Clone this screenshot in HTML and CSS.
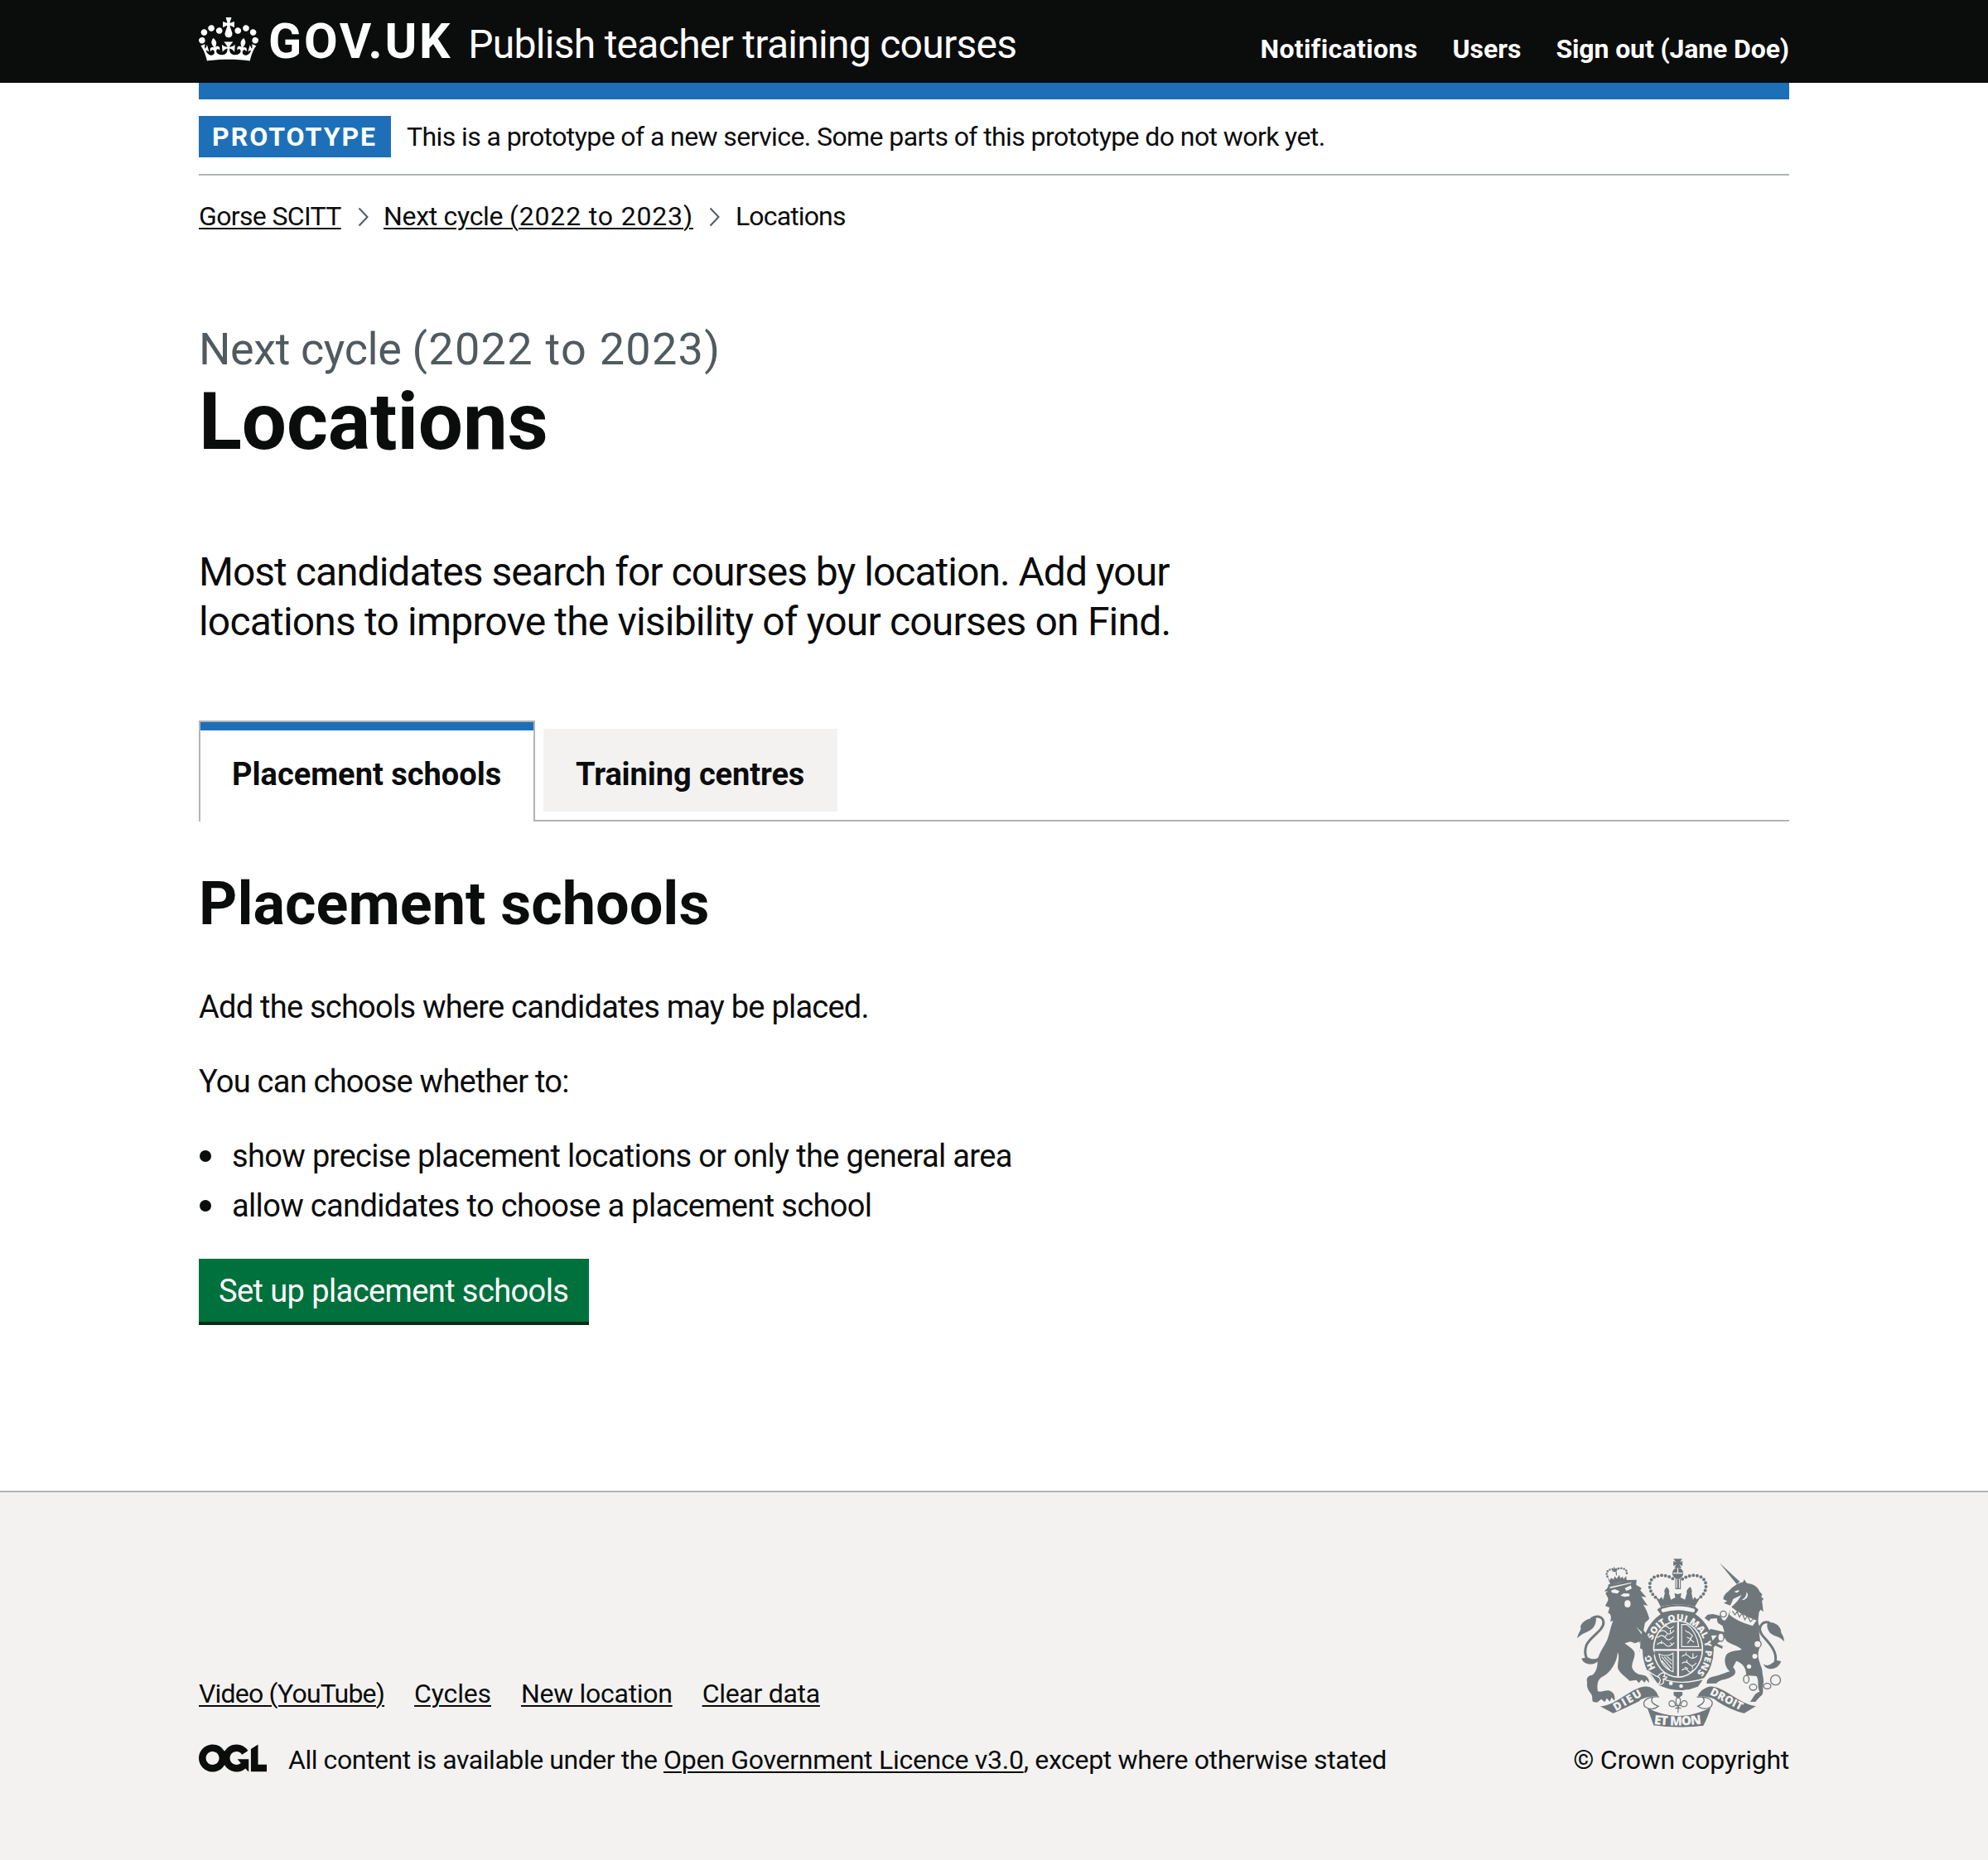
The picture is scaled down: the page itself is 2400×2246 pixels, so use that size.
FILE: index.html
```html
<!DOCTYPE html>
<html lang="en">
<head>
<meta charset="utf-8">
<title>Locations - Publish teacher training courses - GOV.UK</title>
<link rel="stylesheet" href="styles.css">
</head>
<body>
<header class="header">
  <div class="container header__inner">
    <svg class="header__crown" viewBox="0 0 132 97" aria-hidden="true"><path fill="currentColor" fill-rule="evenodd" d="M25 30.2c3.5 1.5 7.7-.2 9.1-3.7 1.5-3.6-.2-7.8-3.9-9.2-3.6-1.4-7.6.3-9.1 3.9-1.4 3.5.3 7.5 3.9 9zM9 39.5c3.6 1.5 7.8-.2 9.2-3.7 1.5-3.6-.2-7.8-3.9-9.1-3.6-1.5-7.6.2-9.1 3.8-1.4 3.5.3 7.5 3.8 9zM4.4 57.2c3.5 1.5 7.7-.2 9.1-3.8 1.5-3.6-.2-7.7-3.9-9.1-3.5-1.5-7.6.3-9.1 3.8-1.4 3.5.3 7.6 3.9 9.1zm38.3-21.4c3.5 1.5 7.7-.2 9.1-3.8 1.5-3.6-.2-7.7-3.9-9.1-3.6-1.5-7.6.3-9.1 3.8-1.3 3.6.4 7.7 3.9 9.1zm64.4-5.6c-3.6 1.5-7.8-.2-9.1-3.7-1.5-3.6.2-7.8 3.8-9.2 3.6-1.4 7.7.3 9.2 3.9 1.3 3.5-.4 7.5-3.9 9zm15.9 9.3c-3.6 1.5-7.7-.2-9.1-3.7-1.5-3.6.2-7.8 3.7-9.1 3.6-1.5 7.7.2 9.2 3.8 1.5 3.5-.3 7.5-3.8 9zm4.7 17.7c-3.6 1.5-7.8-.2-9.2-3.8-1.5-3.6.2-7.7 3.9-9.1 3.6-1.5 7.7.3 9.2 3.8 1.3 3.5-.4 7.6-3.9 9.1zM89.3 35.8c-3.6 1.5-7.8-.2-9.2-3.8-1.4-3.6.2-7.7 3.9-9.1 3.6-1.5 7.7.3 9.2 3.8 1.4 3.6-.3 7.7-3.9 9.1zM69.7 17.7l8.9 4.7V9.3l-8.9 2.8c-.2-.3-.5-.6-.9-.9L72.4 0H59.6l3.5 11.2c-.3.3-.6.5-.9.9l-8.8-2.8v13.1l8.8-4.7c.3.3.6.7.9.9l-5 15.4v.1c-.2.8-.4 1.6-.4 2.4 0 4.1 3.1 7.5 7 8.1h.2c.3 0 .7.1 1 .1.4 0 .7 0 1-.1h.2c4-.6 7.1-4.1 7.1-8.1 0-.8-.1-1.7-.4-2.4V34l-5.1-15.4c.4-.2.7-.6 1-.9zM66 92.8c16.9 0 32.8 1.1 47.1 3.2 4-16.9 8.9-26.7 14-33.5l-9.6-3.4c1 4.9 1.1 7.2 0 10.2-1.5-1.4-3-4.3-4.2-8.7L108.6 76c2.8-2 5-3.2 7.5-3.3-4.4 9.4-10 11.9-13.6 11.2-4.3-.8-6.3-4.6-5.6-7.9 1-4.7 5.7-5.9 8-.5 4.3-8.7-3-11.4-7.6-8.8 7.1-7.2 7.9-13.5 2.1-21.1-8 6.1-8.1 12.3-4.5 20.8-4.7-5.4-12.1-2.5-9.5 6.2 3.4-5.2 7.9-2 7.2 3.1-.6 4.3-6.4 7.8-13.5 7.2-10.3-.9-10.9-8-11.2-13.8 2.5-.5 7.1 1.8 11 7.3L80.2 60c-4.1 4.4-8 5.3-12.3 5.4 1.4-4.4 8-11.6 8-11.6H55.5s6.4 7.2 7.9 11.6c-4.2-.1-8-1-12.3-5.4l1.4 16.4c3.9-5.5 8.5-7.7 10.9-7.3-.3 5.8-.9 12.8-11.1 13.8-7.2.6-12.9-2.9-13.5-7.2-.7-5 3.8-8.3 7.1-3.1 2.7-8.7-4.6-11.6-9.4-6.2 3.7-8.5 3.6-14.7-4.6-20.8-5.8 7.6-5 13.9 2.2 21.1-4.7-2.6-11.9.1-7.7 8.8 2.3-5.5 7.1-4.2 8.1.5.7 3.3-1.3 7.1-5.7 7.9-3.5.7-9-1.8-13.5-11.2 2.5.1 4.7 1.3 7.5 3.3l-4.7-15.4c-1.2 4.4-2.7 7.2-4.3 8.7-1.1-3-.9-5.3 0-10.2l-9.5 3.4c5 6.9 9.9 16.7 14 33.5 14.8-2.1 30.8-3.2 47.7-3.2z"/></svg>
    <a class="header__logo">GOV.UK</a>
    <a class="header__product">Publish teacher training courses</a>
    <nav class="header__nav"><a class="nav-notifications">Notifications</a><a>Users</a><a class="nav-signout">Sign out (Jane Doe)</a></nav>
  </div>
</header>
<div class="container">
  <div class="header-bar"></div>
  <div class="phase-banner"><strong class="tag">PROTOTYPE</strong><span class="phase-banner__text">This is a prototype of a new service. Some parts of this prototype do not work yet.</span></div>
  <nav class="breadcrumbs">
    <a class="link crumb-org">Gorse SCITT</a>
    <svg class="chevron" viewBox="0 0 14 24"><path d="M1.5 1.5 11.5 12 1.5 22.5"/></svg>
    <a class="link crumb-cycle">Next cycle <span class="crumb-cycle__years">(2022 to 2023)</span></a>
    <svg class="chevron" viewBox="0 0 14 24"><path d="M1.5 1.5 11.5 12 1.5 22.5"/></svg>
    <span class="crumb-current">Locations</span>
  </nav>
  <main class="main">
    <span class="caption">Next cycle <span class="caption__years">(2022 to 2023)</span></span>
    <h1 class="heading-xl">Locations</h1>
    <p class="lead"><span class="lead__first">Most candidates search for courses by location. Add your</span><br>locations to improve the visibility of your courses on Find.</p>
    <ul class="tabs">
      <li class="tab tab--selected">Placement schools</li>
      <li class="tab">Training centres</li>
    </ul>
    <h2 class="heading-l">Placement schools</h2>
    <p class="body">Add the schools where candidates may be placed.</p>
    <p class="body">You can choose whether to:</p>
    <ul class="list">
      <li>show precise placement locations or only the general area</li>
      <li>allow candidates to choose a placement school</li>
    </ul>
    <a class="button">Set up placement schools</a>
  </main>
</div>
<footer class="footer">
  <div class="container footer__inner">
    <div class="footer__meta">
      <nav class="footer__links"><a class="link f-video">Video (YouTube)</a><a class="link f-cycles">Cycles</a><a class="link">New location</a><a class="link">Clear data</a></nav>
      <div class="licence">
        <svg class="licence__logo" viewBox="0 0 483.2 195.7" aria-label="OGL"><path fill="currentColor" d="M421.5 142.8V.1l-50.7 32.3v161.1h112.4v-50.7zm-122.3-9.6A47.12 47.12 0 0 1 221 97.8c0-26 21.1-47.1 47.1-47.1 16.7 0 31.4 8.7 39.7 21.8l42.7-27.2A97.63 97.63 0 0 0 268.1 0c-36.5 0-68.3 20.1-85.1 49.7A98 98 0 0 0 97.8 0C43.9 0 0 43.9 0 97.8s43.9 97.8 97.8 97.8c36.5 0 68.3-20.1 85.1-49.7a97.76 97.76 0 0 0 149.6 25.4l19.4 22.2h3v-87.8h-80l24.3 27.5zM97.8 145c-26 0-47.1-21.1-47.1-47.1s21.1-47.1 47.1-47.1 47.1 21.1 47.1 47.1S123.8 145 97.8 145"/></svg>
        <span><span class="licence__lead">All content is available under the </span><a class="link licence__link">Open Government Licence v3.0</a>, except where otherwise stated</span>
      </div>
    </div>
    <div class="copyright">
      <svg class="crest" viewBox="70 65 755 630" aria-hidden="true">
        <defs>
          <path id="garter" d="M357 462A99 109 0 1 1 500 484"/>
          <path id="dieu" d="M213 618Q262 590 316 558"/>
          <path id="droit" d="M551 556Q604 584 668 617"/>
          <path id="mon" d="M350 664Q438 676 526 663"/>
        </defs>
        <!-- lion -->
        <g class="ink">
          <path d="M186 158C203 160 228 153 245 143L288 142L286 160L306 172L301 180L323 205L305 202L328 236L312 232C325 252 330 268 334 283L318 298L313 325C330 338 343 365 347 396L353 408L345 425L330 412L327 423L313 412L316 400L298 402L304 388L298 366L282 372L265 366L245 372C257 384 282 393 281 412C280 430 268 444 272 462C280 480 296 486 310 487C325 488 334 500 333 515L322 504L317 515L306 504L296 516L287 505L262 508C248 494 224 478 220 462C218 440 228 420 219 405C218 440 193 478 168 491C148 500 143 518 147 545C155 551 170 543 184 543C202 545 212 560 208 580L197 568L191 583L180 571L172 585L160 574L145 586L130 584C124 572 131 566 122 554C110 540 106 525 109 513C104 500 112 488 127 487C141 478 147 456 146 438C148 410 172 382 182 358C190 338 194 310 203 291L192 293C200 270 190 262 184 262L190 243L174 236C183 222 188 213 182 204L175 190L184 183L172 184C172 178 184 178 186 158Z"/>
          <path d="M182 132l9 12 4-9 10 6 3-12 8 9 9-14 4 12 9-6 2 10 10-12 2 16-58 18z"/>
          <path d="M206 96l3 10-7 4 12 3 1 13M199 106l20-5" class="line"/>
          <path d="M182 130C176 122 180 108 192 105C200 101 207 104 210 112C216 100 228 99 238 101C250 104 255 112 251 124" class="beads small"/>
          <path d="M73 354C75 334 91 322 84 312C90 295 107 281 141 279C142 300 136 315 118 326C101 335 88 337 73 354Z"/>
          <path d="M100 424L88 427C96 447 119 450 132 446C145 443 152 432 158 418C143 430 127 432 115 424Z"/>
        </g>
        <path class="tail" d="M123 283C142 270 164 273 168 294C171 325 119 348 106 379C99 398 101 416 109 430"/>
        <g class="paper">
          <path d="M195 181l13-5 18 7-7 9-20-3zM245 172l22-10 3 12-19 8zM229 199l12-8 20 1 2 9-18 3z"/>
          <ellipse cx="255" cy="229" rx="11" ry="13"/>
          <path d="M190 168L270 151L267 155L192 173z"/>
          <path d="M286 312L322 347L337 380L333 380L314 351z"/>
        </g>
        <!-- garter and shield -->
        <ellipse cx="438" cy="396" rx="138" ry="156" class="paper"/>
        <ellipse cx="438" cy="396" rx="129" ry="148" class="ink"/>
        <ellipse cx="438" cy="393" rx="91" ry="104" class="paper"/>
        <ellipse cx="438" cy="393" rx="86" ry="99" class="ink"/>
        <path d="M438 294V492M352 396H524" class="cut wide"/>
        <g class="cut">
          <path d="M362 352q18-17 30 0t30-5M368 331q18-12 28 2t28-8M385 312q12-6 18 3t20-5M362 376q18-14 30 1t32-7M393 300v10M399 340l-8 8M410 370l8 8M378 362v12M410 322v12"/>
          <path d="M451 304H470Q504 328 513 384H451ZM474 330l16 14-8 14 14 10M470 350l14 6-12 16M464 325l10 8"/>
          <path d="M369 411Q398 424 420 408V475Q377 460 369 411ZM378 420L414 462M388 421L415 448M398 420L416 436M378 434L408 468"/>
          <path d="M452 420q14-14 26 0t30-3M452 445q14-12 26 2t26-4M452 470q12-12 22 1t18-3M467 405v10M492 408v16M470 432v12M490 452v12M462 458l12 6"/>
        </g>
        <path d="M327 470C380 512 446 526 533 500L512 530Q440 560 367 525Z" class="ink edge"/>
        <path d="M365 492C382 470 398 480 386 492Q410 494 384 502Q392 524 365 520Q383 506 365 492Z" class="ink edge"/>
        <g class="paper"><circle cx="412" cy="517" r="7"/><circle cx="449" cy="527" r="7"/></g>
        <g class="motto"><text class="motto__ring" textLength="500" lengthAdjust="spacingAndGlyphs"><textPath href="#garter">HONI SOIT QUI MAL Y PENSE</textPath></text></g>
        <path d="M308 322C330 338 346 370 347 398L354 408L345 426L330 414L325 425L313 412L316 398L300 390Z" class="ink"/>
        <!-- imperial crown -->
        <g class="ink">
          <path d="M421 66H453L445 78 454 74V92L443 87 451 99H424L432 87 421 92V74L430 78Z"/>
          <circle cx="437" cy="118" r="20"/>
          <path d="M356 203L370 213 378 204 384 214 390 190Q384 180 397 168 410 180 405 190L412 214 428 206 425 190 437 194 450 190 447 206 463 214 470 190Q465 180 482 167 491 180 487 190L492 214 498 204 505 213 520 203 499 239Q438 223 375 239Z"/>
          <path d="M428 138H448V176H428Z"/>
          <path d="M377 239Q438 222 499 239L512 250Q505 262 500 267Q438 250 375 267L362 250Z"/>
        </g>
        <path d="M433 140V172M443 140V172" class="cut"/><path d="M420 118H455M437 99V118" class="cut"/>
        <path d="M379 247Q438 228 497 247Q502 257 493 260Q438 244 383 260Q374 255 379 247Z" class="paper"/>
        <path class="beads" d="M356 205C326 180 331 139 357 130C382 121 406 129 420 139M454 139C468 129 492 121 517 130C543 139 549 180 519 205"/>
        <!-- unicorn -->
        <g class="ink">
          <path d="M588 81L662 149L650 157Z"/>
          <path d="M654 156L674 150 677 140 687 154C714 157 728 169 733 184L743 195 739 204 748 211 742 218 747 258 737 250 731 259C730 278 724 292 733 311C726 332 742 367 733 389C722 420 732 432 737 452C746 470 742 484 746 492L748 512C741 535 753 556 735 565L718 584 699 584C714 565 713 554 733 547C723 526 733 508 722 491L685 488C684 463 676 446 649 436L637 459C652 475 646 487 630 494C611 506 592 500 577 517L542 518Q540 500 560 494C586 490 603 480 625 474C603 452 604 423 616 410C635 395 659 400 669 394C641 371 617 377 607 352L579 373 600 383 598 392 572 380 567 388 558 368 579 343 555 344 545 330 556 320 606 331 599 309 582 298 578 281 556 283 550 292 534 280 545 268 564 266 592 273C602 298 609 291 618 275L632 240C650 225 660 210 668 197L638 211 627 235 604 226 616 219 602 213C603 192 620 187 633 171Z"/>
          <path d="M822 366C808 346 786 348 771 334Q757 317 762 297C785 292 805 307 810 323 810 342 822 340 822 366Z"/>
          <path d="M746 447C768 461 779 440 794 433L811 437C804 461 775 474 753 457Z"/>
        </g>
        <path class="tail" d="M770 297C740 289 727 317 739 336C748 355 801 393 790 438"/>
        <g class="paper">
          <path d="M629 239Q663 268 722 289L708 309Q648 291 624 268Z"/>
          <path d="M641 185l15-6 4 4-9 6zM668 216Q688 203 686 185L691 195Q690 215 668 216Z"/>
        </g>
        <path d="M635 255L644 269 652 257 660 277 670 263 680 287 689 272 700 294 712 282" class="line"/>
        <g class="rings"><circle cx="791" cy="505" r="18"/><ellipse cx="761" cy="527" rx="13" ry="10"/><ellipse cx="710" cy="531" rx="13" ry="11"/><ellipse cx="685" cy="502" rx="10" ry="14"/><ellipse cx="602" cy="266" rx="11" ry="11"/><ellipse cx="593" cy="350" rx="11" ry="15"/><ellipse cx="726" cy="375" rx="13" ry="13"/></g>
        <g class="paper"><circle cx="716" cy="419" r="9"/><circle cx="695" cy="456" r="8"/></g>
        <!-- scroll -->
        <g class="ink edge">
          <path d="M147 598C212 602 262 530 320 526Q357 528 369 565Q315 565 297 584Q250 607 203 628Z"/>
          <path d="M727 598C665 596 611 527 553 526Q515 536 506 567Q560 565 579 584Q626 615 678 628Z"/>
          <path d="M323 602Q380 633 438 633Q500 633 560 600Q547 642 531 672Q438 684 348 671Z"/>
        </g>
        <path class="ribbon" d="M369 566C331 563 303 580 318 602Q345 619 367 600Q330 586 348 566M506 567C550 564 572 580 557 602Q532 617 509 600Q543 586 527 566"/>
        <g class="motto"><text textLength="112"><textPath href="#dieu">DIEU</textPath></text><text textLength="128"><textPath href="#droit">DROIT</textPath></text><text class="motto__mon" textLength="174"><textPath href="#mon">ET MON</textPath></text></g>
        <path class="line" d="M424 550H452M438 552V572M431 575C436 562 441 562 446 575C450 591 440 589 440 606M431 575C427 591 436 589 436 606M427 599C400 611 399 576 419 580Q429 585 428 597H449Q447 585 457 580C477 576 476 611 449 599M427 607H449M438 607V624"/>
        <path d="M422 549H454V560L438 572 422 560Z" class="ink"/>
      </svg>
      <span>© Crown copyright</span>
    </div>
  </div>
</footer>
</body>
</html>
```
FILE: styles.css
```css
* { box-sizing: border-box; }
body {
  margin: 0;
  background: #f3f2f1;
  color: #0b0c0c;
  font: 32px/40px Roboto, "Noto Sans", sans-serif;
  letter-spacing: -0.25px;
}
h1, h2, p, ul { margin: 0; padding: 0; }
ul { list-style: none; }
body > .container { background: #fff; box-shadow: 0 0 0 100vmax #fff; clip-path: inset(0 -100vmax); }
.container { width: 1920px; margin: 0 auto; }
.link { text-decoration: underline; text-decoration-thickness: 2px; text-underline-offset: 3px; }

.header { height: 100px; background: #0b0c0c; color: #fff; }
.header__inner { display: flex; align-items: baseline; padding-top: 20px; white-space: nowrap; }
.header__crown { width: 72px; height: 53px; margin-top: 1px; align-self: flex-start; }
.header__logo { margin-left: 12px; font-size: 59px; line-height: 60px; font-weight: 700; letter-spacing: 2.7px; }
.header__product { margin-left: 19px; font-size: 48px; line-height: 60px; letter-spacing: -0.72px; }
.header__nav { display: flex; gap: 42px; margin-left: auto; font-weight: 700; letter-spacing: 0; }
.nav-notifications { letter-spacing: 0.35px; }
.nav-signout { letter-spacing: -0.12px; }
.header-bar { height: 20px; background: #1d70b8; }

.phase-banner { display: flex; align-items: center; height: 92px; border-bottom: 2px solid #b1b4b6; letter-spacing: -0.59px; }
.tag { width: 232px; padding-left: 16px; background: #1d70b8; color: #fff; line-height: 50px; letter-spacing: 2px; }
.phase-banner__text { margin-left: 19px; }

.breadcrumbs { display: flex; align-items: center; padding-top: 29px; white-space: nowrap; }
.crumb-org { width: 172px; letter-spacing: -0.65px; }
.crumb-cycle { width: 373px; letter-spacing: -0.3px; }
.crumb-cycle__years { letter-spacing: 0.84px; }
.crumb-current { margin-left: 1px; letter-spacing: -0.86px; }
.chevron { width: 14px; height: 24px; margin: 2px 17px 0 20px; fill: none; stroke: #505a5f; stroke-width: 2; }

.main { padding: 111px 0 204px; }
.caption { display: block; color: #505a5f; font-size: 54px; line-height: 60px; letter-spacing: -0.4px; }
.caption__years { letter-spacing: 1.28px; }
.heading-xl { margin-top: 7px; font-size: 96px; line-height: 100px; letter-spacing: -0.1px; }
.lead { margin-top: 102px; font-size: 48px; line-height: 60px; letter-spacing: -0.82px; white-space: nowrap; }
.lead__first { letter-spacing: -0.98px; }
.tabs { display: flex; gap: 10px; height: 122px; margin-top: 89px; border-bottom: 2px solid #b1b4b6; font-size: 38px; line-height: 50px; font-weight: 700; letter-spacing: -0.1px; white-space: nowrap; }
.tab { width: 355px; height: 100px; margin-top: 10px; padding: 30px 0 0 39px; background: #f3f2f1; }
.tab--selected { width: 406px; height: 122px; margin-top: 0; padding: 38px 0 0 38px; background: #fff; border: 2px solid #b1b4b6; border-bottom: 0; box-shadow: inset 0 10px #1d70b8; letter-spacing: 0; }
.heading-l { margin-top: 60px; font-size: 72px; line-height: 80px; letter-spacing: 0; }
.body { margin-top: 40px; font-size: 38px; line-height: 50px; letter-spacing: -0.76px; }
.heading-l + .body { margin-top: 59px; }
.list { display: grid; gap: 10px; margin-top: 40px; font-size: 38px; line-height: 50px; letter-spacing: -0.66px; }
.list li { display: flex; align-items: center; }
.list li::before { content: ""; width: 14px; height: 14px; margin: 0 25px 0 1px; border-radius: 50%; background: #0b0c0c; }
.button { display: block; width: 471px; height: 76px; margin-top: 39px; padding: 14px 0 0 24px; background: #00703c; box-shadow: 0 4px #002d18; color: #fff; font-size: 38px; line-height: 50px; letter-spacing: -0.59px; }

.footer { height: 446px; border-top: 2px solid #b1b4b6; background: #f3f2f1; }
.footer__inner { display: flex; justify-content: space-between; align-items: flex-end; height: 343px; white-space: nowrap; }
.footer__links { display: flex; gap: 36px; letter-spacing: -0.29px; }
.f-video { letter-spacing: -0.8px; }
.f-cycles { letter-spacing: -0.15px; }
.licence { display: flex; align-items: center; margin-top: 40px; letter-spacing: -0.33px; }
.licence__lead { letter-spacing: -0.44px; }
.licence__link { letter-spacing: -0.27px; }
.licence__logo { width: 82px; height: 34px; margin: -4px 26px 0 0; }
.copyright { display: flex; flex-direction: column; align-items: flex-end; }
.crest { width: 252px; height: 210px; margin: 0 5px 13px 0; overflow: visible; font: 800 40px/1 "Open Sans", sans-serif; letter-spacing: 0; }
.ink { fill: #6f777b; }
.paper, .motto { fill: #f3f2f1; }
.cut, .tail, .ribbon, .line, .rings { fill: none; stroke-width: 3.5; stroke: #6f777b; }
.cut { stroke: #f3f2f1; }
.wide { stroke-width: 7; }
.tail { stroke-width: 9; }
.ribbon, .rings { fill: #f3f2f1; stroke-width: 4; }
.edge { stroke: #f3f2f1; stroke-width: 4; }
.beads { fill: none; stroke: #6f777b; stroke-width: 12; stroke-linecap: round; stroke-dasharray: 0 14; }
.small { stroke-width: 8; stroke-dasharray: 0 10; }
.motto__ring { font-size: 33px; }
.motto__mon { font-size: 46px; }
```
